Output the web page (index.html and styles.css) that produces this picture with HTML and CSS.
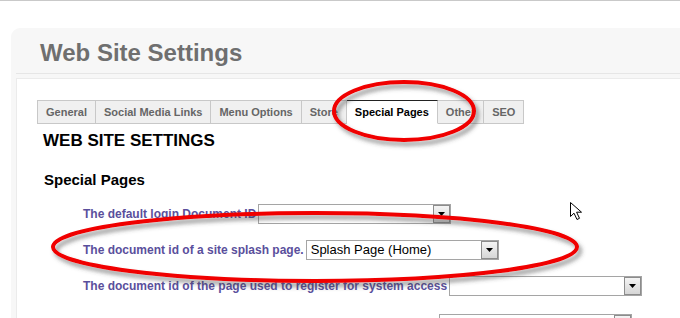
FILE: index.html
```html
<!DOCTYPE html>
<html lang="en">
<head>
<meta charset="utf-8">
<title>Web Site Settings</title>
<link rel="stylesheet" href="styles.css">
</head>
<body>
<div class="panel">
  <div class="panel-head">
    <h1 class="title">Web Site Settings</h1>
  </div>
  <div class="panel-body">
    <ul class="tabs">
      <li class="tab first">General</li>
      <li class="tab">Social Media Links</li>
      <li class="tab">Menu Options</li>
      <li class="tab">Store</li>
      <li class="tab active">Special Pages</li>
      <li class="tab">Other</li>
      <li class="tab">SEO</li>
    </ul>
    <h2 class="section-title">WEB SITE SETTINGS</h2>
    <h3 class="group-title">Special Pages</h3>
    <div class="fields">
      <div class="field-row">
        <label class="field-label">The default login Document ID</label>
        <div class="select"><span class="select-value"></span><span class="select-btn"><svg width="7" height="4" viewBox="0 0 7 4"><path d="M0 0H7L3.5 4Z" fill="#000"/></svg></span></div>
      </div>
      <div class="field-row">
        <label class="field-label">The document id of a site splash page.</label>
        <div class="select"><span class="select-value">Splash Page (Home)</span><span class="select-btn"><svg width="7" height="4" viewBox="0 0 7 4"><path d="M0 0H7L3.5 4Z" fill="#000"/></svg></span></div>
      </div>
      <div class="field-row">
        <label class="field-label">The document id of the page used to register for system access</label>
        <div class="select"><span class="select-value"></span><span class="select-btn"><svg width="7" height="4" viewBox="0 0 7 4"><path d="M0 0H7L3.5 4Z" fill="#000"/></svg></span></div>
      </div>
      <div class="field-row field-row-last">
        <label class="field-label">The document id of the page shown when all access is denied</label>
        <div class="select"><span class="select-value"></span><span class="select-btn"><svg width="7" height="4" viewBox="0 0 7 4"><path d="M0 0H7L3.5 4Z" fill="#000"/></svg></span></div>
      </div>
    </div>
  </div>
</div>

<svg class="annotations" width="680" height="318" viewBox="0 0 680 318">
  <defs>
    <filter id="shadow" x="-10%" y="-30%" width="120%" height="160%">
      <feDropShadow dx="3" dy="4" stdDeviation="2" flood-color="#444" flood-opacity="0.55"/>
    </filter>
  </defs>
  <ellipse cx="404" cy="111" rx="70" ry="29" fill="none" stroke="#f00000" stroke-width="4" filter="url(#shadow)"/>
  <ellipse cx="315" cy="247" rx="262" ry="34" fill="none" stroke="#f00000" stroke-width="4" filter="url(#shadow)"/>
  <path d="M570.5 202.5V216.5L574 213.2L577 219.5L579.5 218.3L576.6 212.2H581.5Z" fill="#fff" stroke="#000" stroke-width="1"/>
</svg>
</body>
</html>
```

FILE: styles.css
```css
html, body {
  margin: 0;
  padding: 0;
}

body {
  border-top: 1px solid #c9c9c9;
  background: #ffffff;
  font-family: "Liberation Sans", Arial, sans-serif;
  position: relative;
  overflow: hidden;
  height: 317px;
}

.panel {
  margin: 27px 0 0 11px;
  padding-left: 5px;
  background: #f7f7f7;
  border-radius: 9px 0 0 0;
}

.panel-head {
  box-sizing: border-box;
  height: 46px;
  padding: 11px 0 0 24px;
  border-bottom: 1px solid #e6e6e6;
  margin-bottom: 4px;
}

.title {
  margin: 0;
  font-size: 24px;
  font-weight: bold;
  color: #6f6f6f;
  line-height: normal;
}

.panel-body {
  background: #ffffff;
  border-top: 1px solid #ebebeb;
  border-left: 1px solid #ebebeb;
  padding: 21px 0 40px 20px;
}

.tabs {
  display: flex;
  list-style: none;
  margin: 0;
  padding: 0;
}

.tab {
  height: 22px;
  line-height: 22px;
  padding: 0 8px;
  font-size: 11px;
  font-weight: bold;
  color: #666666;
  background: #f0f0f0;
  border: 1px solid #c8c8c8;
  border-left: none;
  white-space: nowrap;
}

.tab.first {
  border-left: 1px solid #c8c8c8;
}

.tab.active {
  background: #ffffff;
  color: #000000;
  border-top-color: #222222;
  border-bottom-color: #ffffff;
}

.section-title {
  margin: 7px 0 0 6px;
  font-size: 17px;
  line-height: 20px;
  font-weight: bold;
  color: #000000;
}

.group-title {
  margin: 20px 0 0 7px;
  font-size: 15px;
  line-height: 18px;
  font-weight: bold;
  color: #000000;
}

.fields {
  margin-top: 15px;
  padding-left: 46px;
  display: flex;
  flex-direction: column;
  gap: 16px;
}

.field-row {
  display: flex;
  align-items: center;
  gap: 2px;
  height: 20px;
}

.field-row-last {
  margin-top: 2px;
}

.field-label {
  font-size: 12px;
  font-weight: bold;
  color: #5a4f9c;
  white-space: nowrap;
}

.select {
  box-sizing: border-box;
  width: 193px;
  height: 20px;
  border: 1px solid #a5a5a5;
  background: #ffffff;
  display: flex;
  align-items: stretch;
  flex: none;
}

.select-value {
  flex: 1;
  font-size: 13px;
  line-height: 18px;
  padding-left: 4px;
  color: #000000;
  white-space: nowrap;
  overflow: hidden;
}

.select-btn {
  box-sizing: border-box;
  width: 17px;
  border: 1px solid #8c8c8c;
  background: linear-gradient(#f4f4f4, #d6d6d6);
  display: flex;
  align-items: center;
  justify-content: center;
}

.annotations {
  position: absolute;
  left: 0;
  top: -1px;
  pointer-events: none;
}
```
